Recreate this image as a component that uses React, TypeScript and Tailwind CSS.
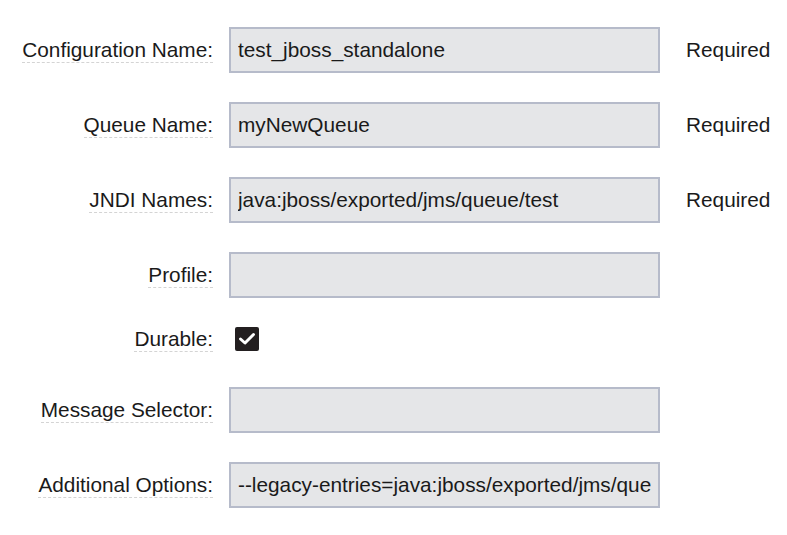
import React from "react"

type Field = {
  label: string
  value?: string
  required?: boolean
  kind?: "text" | "checkbox"
  checked?: boolean
}

const fields: Field[] = [
  { label: "Configuration Name:", value: "test_jboss_standalone", required: true },
  { label: "Queue Name:", value: "myNewQueue", required: true },
  { label: "JNDI Names:", value: "java:jboss/exported/jms/queue/test", required: true },
  { label: "Profile:", value: "" },
  { label: "Durable:", kind: "checkbox", checked: true },
  { label: "Message Selector:", value: "" },
  { label: "Additional Options:", value: "--legacy-entries=java:jboss/exported/jms/queue/test" },
]

function Label({ text }: { text: string }) {
  return (
    <div className="w-[213px] shrink-0 flex justify-end">
      <span className="border-b border-dashed border-[#d4d4d4] leading-[24px]">{text}</span>
    </div>
  )
}

function CheckBox({ checked }: { checked?: boolean }) {
  return (
    <div className="ml-[6px] w-[24px] h-[24px] rounded-[2px] bg-[#231f20] flex items-center justify-center">
      {checked && (
        <svg width="24" height="24" viewBox="0 0 24 24">
          <polyline
            points="5.5,12 10,16 18.5,7.5"
            fill="none"
            stroke="#ffffff"
            strokeWidth="3"
            strokeLinecap="round"
            strokeLinejoin="round"
          />
        </svg>
      )}
    </div>
  )
}

export default function App() {
  return (
    <div
      className="w-[787px] h-[535px] bg-white text-[#1a1a1a] text-[20.8px] pt-[27px]"
      style={{ fontFamily: '"Liberation Sans", Arial, sans-serif' }}
    >
      {fields.map((f) =>
        f.kind === "checkbox" ? (
          <div key={f.label} className="flex items-center gap-[16px] h-[24px] mb-[36px]">
            <Label text={f.label} />
            <CheckBox checked={f.checked} />
          </div>
        ) : (
          <div key={f.label} className="flex items-center gap-[16px] h-[46px] mb-[29px]">
            <Label text={f.label} />
            <input
              readOnly
              value={f.value}
              className="w-[431px] h-[46px] shrink-0 border-2 border-[#b6bbca] bg-[#e5e6e8] px-[7px] text-[20.8px] text-[#1a1a1a] outline-none"
              style={{ fontFamily: '"Liberation Sans", Arial, sans-serif' }}
            />
            {f.required && <span className="ml-[10px] leading-[24px]">Required</span>}
          </div>
        )
      )}
    </div>
  )
}
